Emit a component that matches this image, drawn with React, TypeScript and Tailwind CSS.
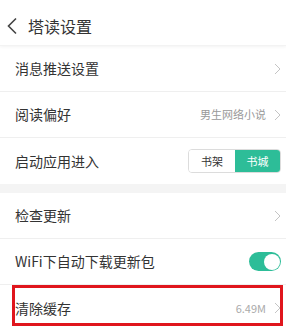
import React from "react";

const Chevron = () => (
  <svg width="7" height="12" viewBox="0 0 7 12" fill="none" className="shrink-0">
    <path d="M1 1l5 5-5 5" stroke="#c4c4c4" strokeWidth="1" />
  </svg>
);

const Row = ({ children, last }: { children: React.ReactNode; last?: boolean }) => (
  <div className={`h-[46px] flex items-center pl-[15px] pr-[5px] ${last ? "" : "border-b border-[#efefef]"}`}>
    {children}
  </div>
);

export default function App() {
  return (
    <div
      className="w-[286px] h-[329px] bg-white overflow-hidden relative text-[#333]"
      style={{ fontFamily: '"Noto Sans CJK SC", "Noto Sans", sans-serif' }}
    >
      <div className="h-[46px] pt-[7px] flex items-center shadow-[0_1px_3px_rgba(0,0,0,0.05)] border-b border-[#f3f3f3] relative z-10">
        <svg width="12" height="18" viewBox="0 0 12 18" className="ml-[6px]" fill="none">
          <path d="M10 1.5L2.5 9l7.5 7.5" stroke="#444" strokeWidth="1.6" />
        </svg>
        <span className="ml-[10px] text-[16px] leading-none">塔读设置</span>
      </div>
      <Row>
        <span className="text-[14px] flex-1">消息推送设置</span>
        <Chevron />
      </Row>
      <Row>
        <span className="text-[14px] flex-1">阅读偏好</span>
        <span className="text-[11px] text-[#999] mr-[8px]">男生网络小说</span>
        <Chevron />
      </Row>
      <Row last>
        <span className="text-[14px] flex-1">启动应用进入</span>
        <div className="flex h-[24px] mr-[0px] rounded-[4px] border border-[#dcdcdc] overflow-hidden text-[11px]">
          <div className="w-[46px] flex items-center justify-center bg-white text-[#333]">书架</div>
          <div className="w-[45px] flex items-center justify-center bg-[#2dbd98] text-white">书城</div>
        </div>
      </Row>
      <div className="h-[9px] bg-[#f4f4f4]" />
      <Row>
        <span className="text-[14px] flex-1">检查更新</span>
        <Chevron />
      </Row>
      <Row>
        <span className="text-[14px] flex-1">WiFi下自动下载更新包</span>
        <div className="w-[32px] h-[19px] rounded-full bg-[#2dbd98] relative mr-[0px]">
          <div className="absolute right-[1.5px] top-[1.5px] w-[16px] h-[16px] rounded-full bg-white" />
        </div>
      </Row>
      <Row last>
        <span className="text-[14px] flex-1">清除缓存</span>
        <span className="text-[11px] text-[#aaa] mr-[8px]">6.49M</span>
        <Chevron />
      </Row>
      <div className="absolute left-[12px] top-[285px] w-[271px] h-[41px] border-[3px] border-[#e0161d]" />
    </div>
  );
}
